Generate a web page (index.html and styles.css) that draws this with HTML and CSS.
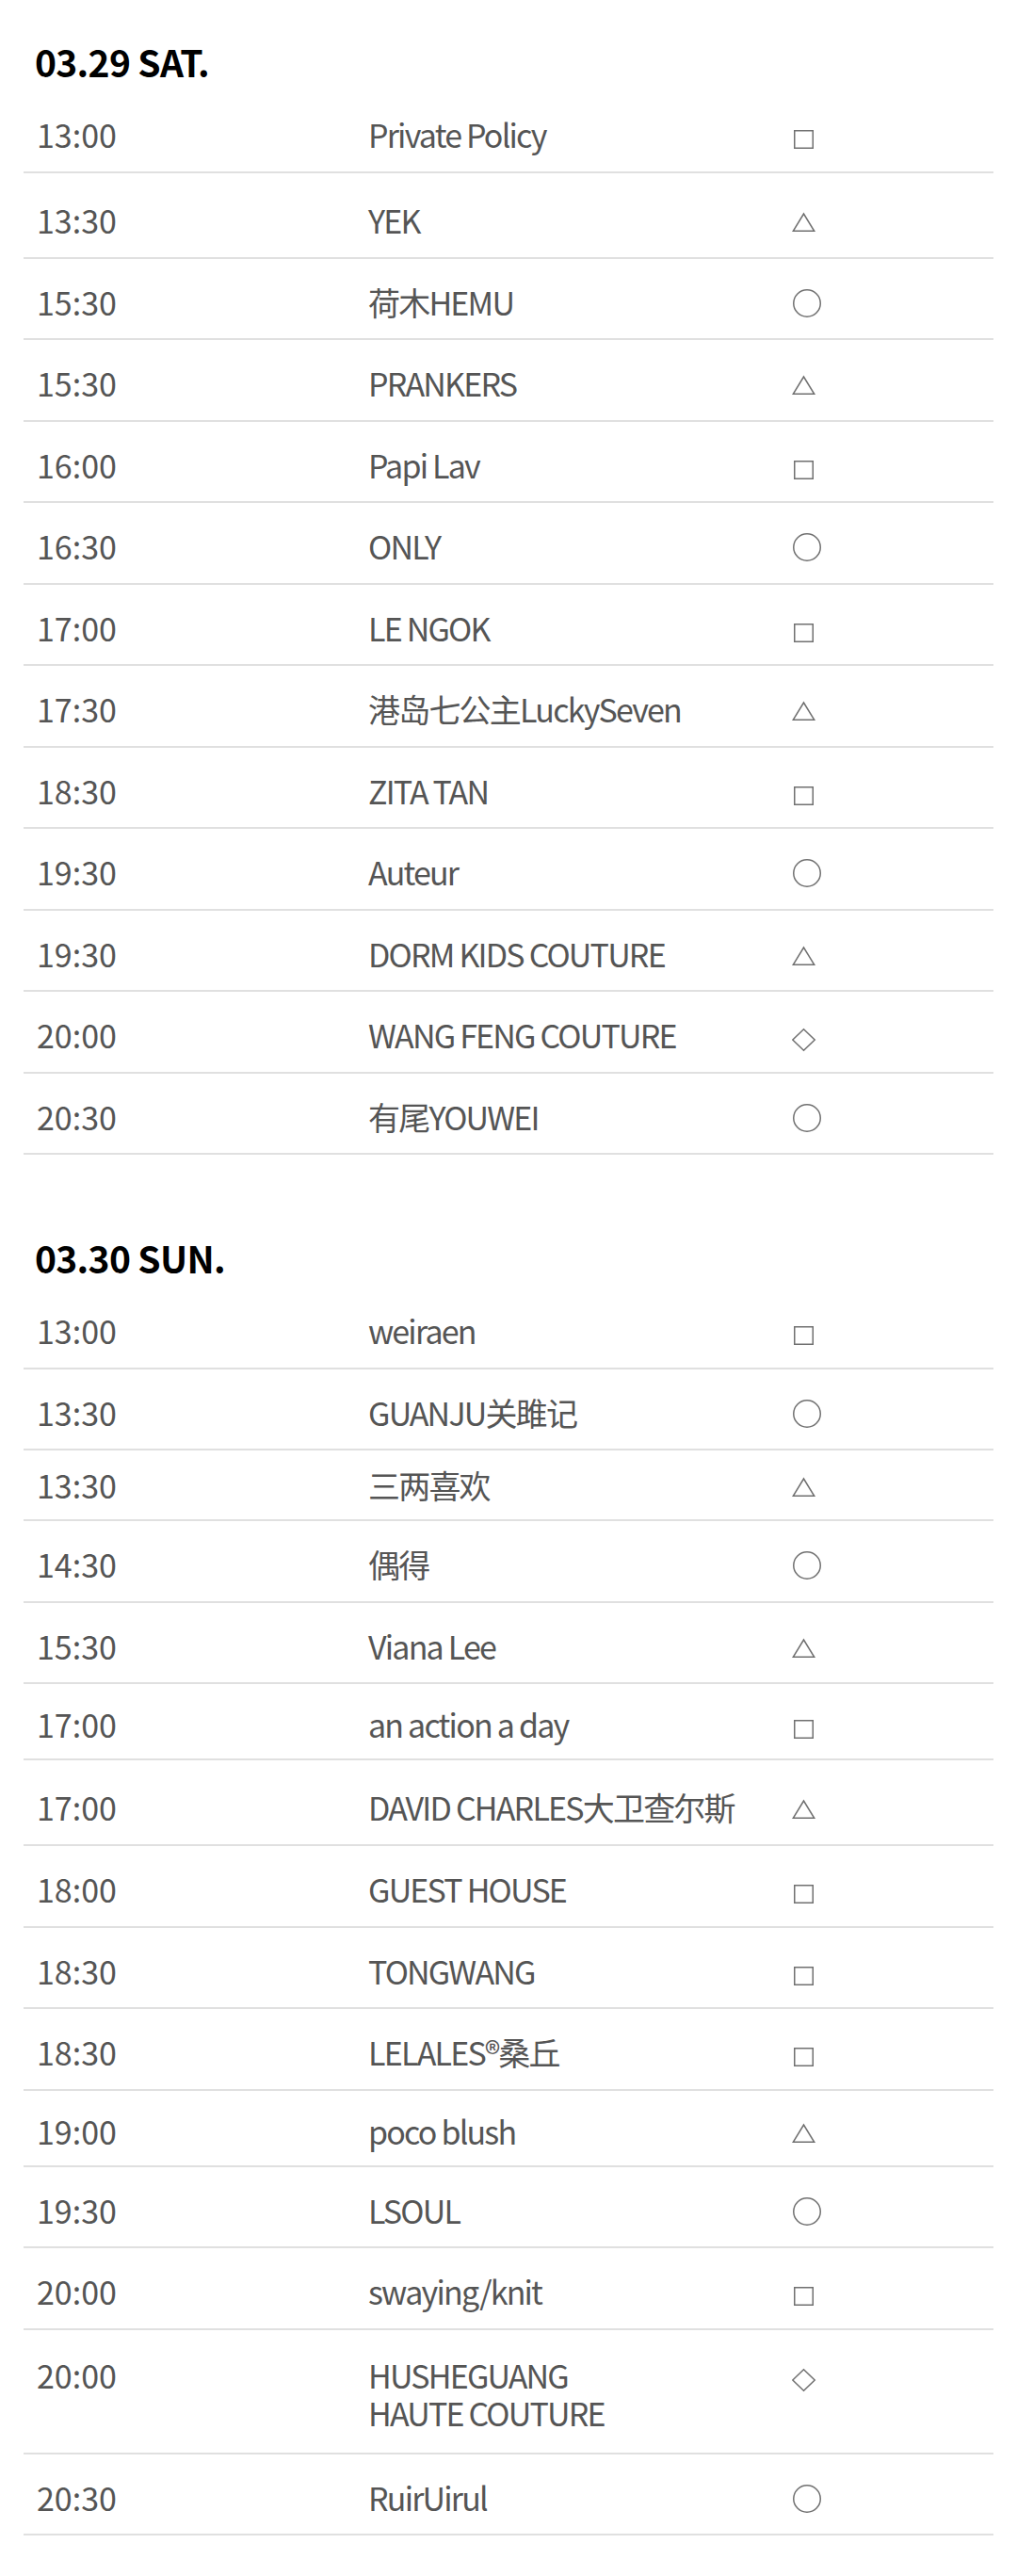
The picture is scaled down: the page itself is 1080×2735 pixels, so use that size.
FILE: index.html
```html
<!DOCTYPE html>
<html lang="zh-CN">
<head>
    <meta charset="UTF-8">
    <meta name="viewport" content="width=device-width, initial-scale=1.0">
    <title>日程表</title>
    <link rel="stylesheet" href="styles.css">
</head>
<body>
    <!-- shapes for the last column -->
    <svg class="defs" aria-hidden="true">
        <symbol id="m-square" viewBox="0 0 32 32"><rect x="2.75" y="9.75" width="19.5" height="18.5"/></symbol>
        <symbol id="m-triangle" viewBox="0 0 32 32"><polygon points="12.5,7 1.3,25.25 23.7,25.25"/></symbol>
        <symbol id="m-circle" viewBox="0 0 32 32"><circle cx="16" cy="15" r="14.25"/></symbol>
        <symbol id="m-diamond" viewBox="0 0 32 32"><polygon points="12.5,7.8 24.2,19 12.5,30.2 0.8,19"/></symbol>
    </svg>

    <div class="schedule">
        <section class="day">
            <h2 class="day-title">03.29 SAT.</h2>
            <ul class="slots">
                <li class="slot"><span class="time">13:00</span><span class="brand">Private Policy</span><svg class="mark"><use href="#m-square"/></svg></li>
                <li class="slot slot-tall"><span class="time">13:30</span><span class="brand">YEK</span><svg class="mark"><use href="#m-triangle"/></svg></li>
                <li class="slot"><span class="time">15:30</span><span class="brand">荷木HEMU</span><svg class="mark"><use href="#m-circle"/></svg></li>
                <li class="slot"><span class="time">15:30</span><span class="brand">PRANKERS</span><svg class="mark"><use href="#m-triangle"/></svg></li>
                <li class="slot"><span class="time">16:00</span><span class="brand">Papi Lav</span><svg class="mark"><use href="#m-square"/></svg></li>
                <li class="slot"><span class="time">16:30</span><span class="brand">ONLY</span><svg class="mark"><use href="#m-circle"/></svg></li>
                <li class="slot"><span class="time">17:00</span><span class="brand">LE NGOK</span><svg class="mark"><use href="#m-square"/></svg></li>
                <li class="slot"><span class="time">17:30</span><span class="brand">港岛七公主LuckySeven</span><svg class="mark"><use href="#m-triangle"/></svg></li>
                <li class="slot"><span class="time">18:30</span><span class="brand">ZITA TAN</span><svg class="mark"><use href="#m-square"/></svg></li>
                <li class="slot"><span class="time">19:30</span><span class="brand">Auteur</span><svg class="mark"><use href="#m-circle"/></svg></li>
                <li class="slot"><span class="time">19:30</span><span class="brand">DORM KIDS COUTURE</span><svg class="mark"><use href="#m-triangle"/></svg></li>
                <li class="slot"><span class="time">20:00</span><span class="brand">WANG FENG COUTURE</span><svg class="mark"><use href="#m-diamond"/></svg></li>
                <li class="slot"><span class="time">20:30</span><span class="brand">有尾YOUWEI</span><svg class="mark"><use href="#m-circle"/></svg></li>
            </ul>
        </section>

        <section class="day">
            <h2 class="day-title">03.30 SUN.</h2>
            <ul class="slots">
                <li class="slot"><span class="time">13:00</span><span class="brand">weiraen</span><svg class="mark"><use href="#m-square"/></svg></li>
                <li class="slot"><span class="time">13:30</span><span class="brand">GUANJU关雎记</span><svg class="mark"><use href="#m-circle"/></svg></li>
                <li class="slot slot-short"><span class="time">13:30</span><span class="brand">三两喜欢</span><svg class="mark"><use href="#m-triangle"/></svg></li>
                <li class="slot"><span class="time">14:30</span><span class="brand">偶得</span><svg class="mark"><use href="#m-circle"/></svg></li>
                <li class="slot"><span class="time">15:30</span><span class="brand">Viana Lee</span><svg class="mark"><use href="#m-triangle"/></svg></li>
                <li class="slot slot-snug"><span class="time">17:00</span><span class="brand">an action a day</span><svg class="mark"><use href="#m-square"/></svg></li>
                <li class="slot slot-tall"><span class="time">17:00</span><span class="brand">DAVID CHARLES大卫查尔斯</span><svg class="mark"><use href="#m-triangle"/></svg></li>
                <li class="slot"><span class="time">18:00</span><span class="brand">GUEST HOUSE</span><svg class="mark"><use href="#m-square"/></svg></li>
                <li class="slot"><span class="time">18:30</span><span class="brand">TONGWANG</span><svg class="mark"><use href="#m-square"/></svg></li>
                <li class="slot"><span class="time">18:30</span><span class="brand">LELALES®桑丘</span><svg class="mark"><use href="#m-square"/></svg></li>
                <li class="slot slot-snug"><span class="time">19:00</span><span class="brand">poco blush</span><svg class="mark"><use href="#m-triangle"/></svg></li>
                <li class="slot"><span class="time">19:30</span><span class="brand">LSOUL</span><svg class="mark"><use href="#m-circle"/></svg></li>
                <li class="slot"><span class="time">20:00</span><span class="brand">swaying/knit</span><svg class="mark"><use href="#m-square"/></svg></li>
                <li class="slot slot-wrap"><span class="time">20:00</span><span class="brand">HUSHEGUANG<br>HAUTE COUTURE</span><svg class="mark"><use href="#m-diamond"/></svg></li>
                <li class="slot"><span class="time">20:30</span><span class="brand">RuirUirul</span><svg class="mark"><use href="#m-circle"/></svg></li>
            </ul>
        </section>
    </div>
</body>
</html>
```

FILE: styles.css
```css
body {
    margin: 0;
    background: #ffffff;
    color: #555555;
    font-family: "Noto Sans CJK SC", "Noto Sans", sans-serif;
}
.defs {
    position: absolute;
    width: 0;
    height: 0;
    overflow: hidden;
}
.schedule {
    padding: 41px 25px 40px;
}
.day + .day {
    margin-top: 85px;
}
.day-title {
    margin: 0 0 8px 12px;
    font-size: 39px;
    line-height: 48px;
    font-weight: 700;
    letter-spacing: -0.7px;
    color: #000000;
}
.slots {
    list-style: none;
    margin: 0;
    padding: 0;
}
.slot {
    display: grid;
    grid-template-columns: 352px 450px 1fr;
    align-items: start;
    padding: 26px 0 18.5px 14px;
    border-bottom: 2px solid #e0e0e0;
    font-size: 34px;
    line-height: 40px;
}
.slot-tall {
    padding-top: 30px;
    padding-bottom: 19px;
}
.slot-snug {
    padding-top: 23px;
    padding-bottom: 16px;
}
.slot-short {
    padding-top: 17px;
    padding-bottom: 16px;
}
.slot-wrap {
    padding-top: 28px;
    padding-bottom: 22px;
}
.brand {
    letter-spacing: -1.8px;
}
.mark {
    display: block;
    width: 32px;
    height: 32px;
    margin-top: 6px;
    overflow: visible;
    fill: none;
    stroke: #707070;
    stroke-width: 1.5;
}
```
